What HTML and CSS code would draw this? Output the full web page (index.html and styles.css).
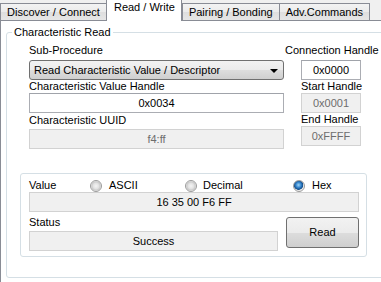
FILE: index.html
```html
<!DOCTYPE html>
<html>
<head>
<meta charset="utf-8">
<link rel="stylesheet" href="styles.css">
</head>
<body>
<div class="tabs">
  <div class="tab">Discover / Connect</div>
  <div class="tab active">Read / Write</div>
  <div class="tab">Pairing / Bonding</div>
  <div class="tab">Adv.Commands</div>
</div>
<div class="page">
  <div class="group">
    <div class="legend">Characteristic Read</div>
    <div class="main">
      <div class="col-left">
        <div class="lbl">Sub-Procedure</div>
        <div class="select">Read Characteristic Value / Descriptor<span class="arrow"></span></div>
        <div class="lbl">Characteristic Value Handle</div>
        <div class="box">0x0034</div>
        <div class="lbl lbl-gap">Characteristic UUID</div>
        <div class="box disabled box-gap">f4:ff</div>
      </div>
      <div class="col-right">
        <div class="lbl">Connection Handle</div>
        <div class="box small conn">0x0000</div>
        <div class="lbl indent">Start Handle</div>
        <div class="box small disabled">0x0001</div>
        <div class="lbl indent">End Handle</div>
        <div class="box small disabled">0xFFFF</div>
      </div>
    </div>
    <div class="vgroup">
      <div class="vrow">
        <div class="vlabel">Value</div>
        <div class="radio r-ascii"><span class="dot"></span>ASCII</div>
        <div class="radio r-dec"><span class="dot"></span>Decimal</div>
        <div class="radio"><span class="dot checked"></span>Hex</div>
      </div>
      <div class="box ro value">16 35 00 F6 FF</div>
      <div class="srow">
        <div class="scol">
          <div class="lbl">Status</div>
          <div class="box ro status">Success</div>
        </div>
        <div class="button">Read</div>
      </div>
    </div>
  </div>
</div>
</body>
</html>
```
FILE: styles.css
```css
html, body {
  margin: 0;
  padding: 0;
}
body {
  width: 381px;
  height: 282px;
  overflow: hidden;
  background: #f0f0f0;
  font-family: "Liberation Sans", Arial, sans-serif;
  font-size: 11px;
  color: #000;
}
.tabs {
  display: flex;
  align-items: flex-end;
  height: 20px;
  padding-left: 0;
  position: relative;
  z-index: 2;
}
.tab {
  height: 16px;
  line-height: 16px;
  padding: 0 6px;
  border: 1px solid #898c95;
  border-bottom: none;
  border-right: none;
  background: linear-gradient(#f3f3f3, #ebebeb 50%, #dedede 50%, #e6e6e6);
  white-space: nowrap;
}
.tab:nth-child(3) { border-left: 1px solid #898c95; }
.tab:last-child { border-right: 1px solid #898c95; }
.tab.active {
  height: 21px;
  line-height: 15px;
  background: #fff;
  border-right: 1px solid #898c95;
  margin-bottom: -1px;
  padding: 0 6px 0 7px;
}
.page {
  height: 262px;
  border-top: 1px solid #898c95;
  border-left: 1px solid #898c95;
  background: #fff;
  box-sizing: border-box;
  padding-top: 11px;
  padding-left: 5px;
}
.group {
  position: relative;
  width: 390px;
  height: 246px;
  box-sizing: border-box;
  border: 1px solid #d5dfe5;
  border-radius: 3px;
  padding: 11px 0 0 22px;
}
.legend {
  position: absolute;
  left: 5px;
  top: -7px;
  padding: 0 2px;
  background: #fff;
  line-height: 13px;
}
.main {
  display: grid;
  grid-template-columns: 255px 95px;
  column-gap: 1px;
}
.col-left, .col-right {
  display: flex;
  flex-direction: column;
}
.lbl {
  line-height: 13px;
  height: 13px;
  white-space: nowrap;
}
.lbl-gap { margin-top: 1px; }
.indent { margin-left: 16px; }
.select {
  position: relative;
  margin-top: 3px;
  height: 20px;
  box-sizing: border-box;
  border: 1px solid #707070;
  border-radius: 3px;
  background: linear-gradient(#f2f2f2, #ebebeb 50%, #dddddd 50%, #cfcfcf);
  line-height: 18px;
  padding-left: 4px;
}
.arrow {
  position: absolute;
  right: 5px;
  top: 8px;
  width: 0;
  height: 0;
  border-left: 4px solid transparent;
  border-right: 4px solid transparent;
  border-top: 4px solid #000;
}
.box {
  height: 20px;
  box-sizing: border-box;
  border: 1px solid #abadb3;
  border-top-color: #a0a3aa;
  background: #fff;
  text-align: center;
  line-height: 18px;
}
.box-gap { margin-top: 2px; }
.box.disabled {
  background: #f0f0f0;
  border-color: #d2d2d2;
  color: #6d6d6d;
}
.box.ro {
  background: #f0f0f0;
  border-color: #d2d2d2;
}
.box.small {
  width: 60px;
  margin-left: 16px;
}
.box.conn { margin-top: 3px; }
.vgroup {
  margin-top: 24px;
  margin-left: -9px;
  width: 347px;
  height: 84px;
  box-sizing: border-box;
  border: 1px solid #d5dfe5;
  border-radius: 3px;
  padding: 5px 0 0 8px;
}
.vrow {
  display: flex;
  height: 13px;
  line-height: 13px;
}
.vlabel { width: 61px; }
.radio {
  display: flex;
  align-items: center;
  gap: 7px;
}
.r-ascii { width: 95px; }
.r-dec { width: 108px; gap: 6px; }
.dot {
  width: 12px;
  height: 12px;
  box-sizing: border-box;
  border-radius: 50%;
  border: 1px solid #9a9a9a;
  background: radial-gradient(circle at 50% 50%, #f4f4f4 0, #e2e2e2 40%, #c9c9c9 60%, #eeeeee 70%);
}
.dot.checked {
  background: radial-gradient(circle at 45% 40%, #9fd6f7 0, #3a8ad1 30%, #124d8a 55%, #e8e8e8 62%, #f6f6f6 80%);
}
.box.value {
  width: 330px;
  margin-top: 0;
}
.srow {
  display: flex;
  align-items: flex-start;
}
.scol {
  display: flex;
  flex-direction: column;
  width: 249px;
  padding-top: 4px;
}
.scol .lbl { height: 15px; }
.status { width: 249px; }
.button {
  margin-left: 8px;
  margin-top: 5px;
  width: 73px;
  height: 31px;
  box-sizing: border-box;
  border: 1px solid #707070;
  border-radius: 3px;
  background: linear-gradient(#f2f2f2, #ebebeb 50%, #dddddd 50%, #cfcfcf);
  text-align: center;
  line-height: 29px;
}
```
